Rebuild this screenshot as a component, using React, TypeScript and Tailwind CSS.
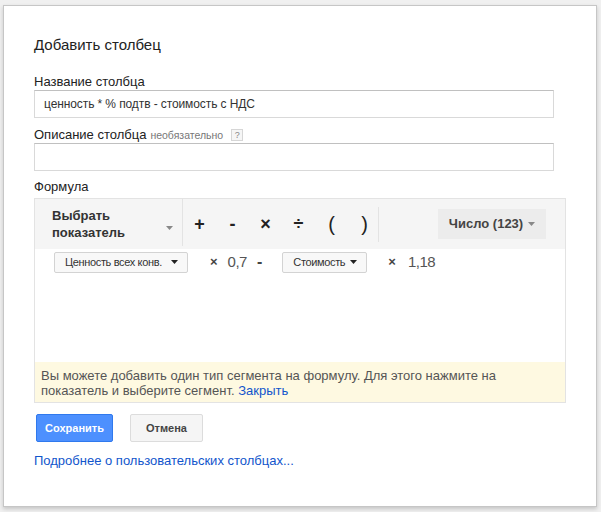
import React from 'react';

const ops = ['+', '-', '×', '÷', '(', ')'];

function Caret({ className = '' }: { className?: string }) {
  return (
    <svg width="7" height="4" viewBox="0 0 7 4" className={className}>
      <path d="M0 0h7L3.5 4z" fill="currentColor" />
    </svg>
  );
}

function Chip({ label, width }: { label: string; width: string }) {
  return (
    <div
      className={`${width} h-[21px] flex items-center justify-between pl-[10px] pr-[9px] border border-[#d3d3d3] rounded-[2px] bg-[#f8f8f8] text-[11px] tracking-[-0.35px] whitespace-nowrap text-[#333]`}
    >
      <span>{label}</span>
      <Caret className="text-[#222]" />
    </div>
  );
}

export default function App() {
  return (
    <div className="w-[601px] h-[512px] bg-[#f0f0f0] pt-[5px] pl-[3px] font-['Liberation_Sans',Arial,sans-serif]">
      <div className="w-[594px] h-[502px] border border-[#c6c6c6] bg-white shadow-[0_2px_4px_rgba(0,0,0,0.18)] pl-[30px] pt-[29px]">
        <h1 className="text-[15px] leading-[20px] text-[#222]">Добавить столбец</h1>

        <div className="mt-[19px] text-[13px] leading-[16px] text-[#222]">Название столбца</div>
        <input
          readOnly
          defaultValue="ценность * % подтв - стоимость с НДС"
          className="block w-[520px] h-[28px] border border-[#d9d9d9] border-t-[#c0c0c0] px-[9px] text-[12px] tracking-[-0.1px] text-[#333] outline-none"
        />

        <div className="mt-[9px] flex items-center text-[13px] leading-[16px] text-[#222]">
          <span>Описание столбца</span>
          <span className="ml-[4px] text-[10.5px] text-[#777]">необязательно</span>
          <span className="ml-[8px] w-[12px] h-[12px] flex items-center justify-center border border-[#d6d6d6] bg-[#f6f6f6] text-[9px] leading-none text-[#888]">
            ?
          </span>
        </div>
        <input
          readOnly
          defaultValue=""
          className="block w-[520px] h-[28px] border border-[#d9d9d9] border-t-[#c0c0c0] px-[9px] text-[12px] text-[#333] outline-none"
        />

        <div className="mt-[8px] text-[13px] leading-[16px] text-[#222]">Формула</div>

        <div className="mt-[3px] w-[532px] border border-[#e3e3e3]">
          <div className="h-[50px] bg-[#f5f5f5] flex items-center">
            <div className="w-[147px] h-full flex items-center pl-[17px] pr-[9px] justify-between">
              <span className="text-[13px] leading-[17px] font-bold text-[#333]">
                Выбрать
                <br />
                показатель
              </span>
              <Caret className="text-[#888] mt-[8px]" />
            </div>
            <div className="w-px h-[47px] bg-[#e3e3e3] self-end mb-[3px]" />
            {ops.map((op) => (
              <div
                key={op}
                className="w-[33px] text-center text-[18px] leading-none font-bold text-[#222]"
              >
                {op === '(' || op === ')' ? <span className="font-normal text-[20px]">{op}</span> : op}
              </div>
            ))}
            <div className="ml-[-3px] w-px h-[35px] bg-[#e3e3e3]" />
            <div className="ml-auto mr-[19px] w-[108px] h-[30px] bg-[#ececec] flex items-center justify-center gap-[5px] text-[13px] font-bold text-[#444]">
              <span>Число (123)</span>
              <Caret className="text-[#888]" />
            </div>
          </div>

          <div className="h-[113px] pt-[1px] pl-[19px]">
            <div className="flex items-center text-[#444]">
              <Chip label="Ценность всех конв." width="w-[134px]" />
              <span className="ml-[22px] text-[13px] font-bold">×</span>
              <span className="ml-[10px] text-[15px] tracking-[-0.5px] text-[#555]">0,7</span>
              <span className="ml-[10px] text-[16px] font-bold">-</span>
              <div className="ml-[20px]">
                <Chip label="Стоимость" width="w-[85px]" />
              </div>
              <span className="ml-[21px] text-[13px] font-bold">×</span>
              <span className="ml-[12px] text-[15px] tracking-[-0.5px] text-[#555]">1,18</span>
            </div>
          </div>

          <div className="bg-[#fef9e1] px-[6px] pt-[6px] pb-[4px] text-[13px] leading-[15px] text-[#555]">
            Вы можете добавить один тип сегмента на формулу. Для этого нажмите на
            <br />
            показатель и выберите сегмент. <span className="text-[#15c]">Закрыть</span>
          </div>
        </div>

        <div className="mt-[11px] ml-[2px] flex">
          <button className="w-[77px] h-[28px] bg-[#4d90fe] border border-[#3079ed] rounded-[2px] text-white text-[11px] font-bold">
            Сохранить
          </button>
          <button className="ml-[17px] w-[73px] h-[28px] bg-[#f5f5f5] border border-[#dcdcdc] rounded-[2px] text-[#444] text-[11px] font-bold">
            Отмена
          </button>
        </div>

        <div className="mt-[11px] text-[13px] leading-[16px] text-[#15c]">
          Подробнее о пользовательских столбцах...
        </div>
      </div>
    </div>
  );
}
